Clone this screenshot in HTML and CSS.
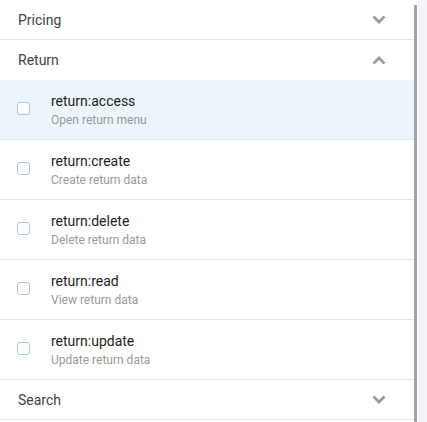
FILE: index.html
```html
<!DOCTYPE html>
<html>
<head>
<meta charset="utf-8">
<link rel="stylesheet" href="styles.css">
</head>
<body>
<div class="frame">
  <div class="panel">
    <div class="group-head bordered">
      <span class="group-title">Pricing</span>
      <svg class="chev" viewBox="0 0 14 9" width="14" height="9"><path d="M1.5 1.5 L7 7 L12.5 1.5" fill="none" stroke="#9a9a9a" stroke-width="2.8"/></svg>
    </div>
    <div class="group-head">
      <span class="group-title">Return</span>
      <svg class="chev" viewBox="0 0 14 9" width="14" height="9"><path d="M1.5 7.5 L7 2 L12.5 7.5" fill="none" stroke="#9a9a9a" stroke-width="2.8"/></svg>
    </div>
    <div class="item active">
      <span class="box"></span>
      <div class="texts"><div class="name">return:access</div><div class="desc">Open return menu</div></div>
    </div>
    <div class="item">
      <span class="box"></span>
      <div class="texts"><div class="name">return:create</div><div class="desc">Create return data</div></div>
    </div>
    <div class="item">
      <span class="box"></span>
      <div class="texts"><div class="name">return:delete</div><div class="desc">Delete return data</div></div>
    </div>
    <div class="item">
      <span class="box"></span>
      <div class="texts"><div class="name">return:read</div><div class="desc">View return data</div></div>
    </div>
    <div class="item">
      <span class="box"></span>
      <div class="texts"><div class="name">return:update</div><div class="desc">Update return data</div></div>
    </div>
    <div class="group-head bordered">
      <span class="group-title">Search</span>
      <svg class="chev" viewBox="0 0 14 9" width="14" height="9"><path d="M1.5 1.5 L7 7 L12.5 1.5" fill="none" stroke="#9a9a9a" stroke-width="2.8"/></svg>
    </div>
  </div>
  <div class="scroll"><div class="thumb"></div></div>
  <div class="track"></div>
</div>
</body>
</html>
```
FILE: styles.css
```css
html, body { margin: 0; padding: 0; background: #fff; }
body { font-family: Roboto, "Noto Sans", Arial, sans-serif; }
.frame { display: flex; width: 427px; height: 422px; overflow: hidden; }
.panel { width: 414px; flex: none; }
.scroll { width: 4px; flex: none; padding-top: 5px; box-sizing: border-box; }
.thumb { width: 3px; height: 100%; background: #a3a3a3; }
.track { flex: 1; background: #f2f4fa; }
.group-head { height: 40px; box-sizing: border-box; display: flex; align-items: center; justify-content: space-between; padding: 0 28px 0 18px; }
.group-head.bordered { border-bottom: 1px solid #e6e7ee; }
.group-title { font-size: 14px; color: #444; }
.chev { display: block; }
.item { height: 60px; box-sizing: border-box; border-bottom: 1px solid #e6e7ee; display: flex; align-items: center; padding-left: 17px; }
.item.active { background: #ebf5fb; }
.box { width: 11px; height: 11px; border: 1px solid #a9c9e2; border-radius: 3px; background: #fff; flex: none; margin-top: -3px; }
.texts { margin-left: 21px; margin-top: 0; }
.name { font-size: 14px; color: #1e1e1e; line-height: 18px; }
.desc { font-size: 12px; color: #9a9a9a; line-height: 16px; margin-top: 2px; }
```
